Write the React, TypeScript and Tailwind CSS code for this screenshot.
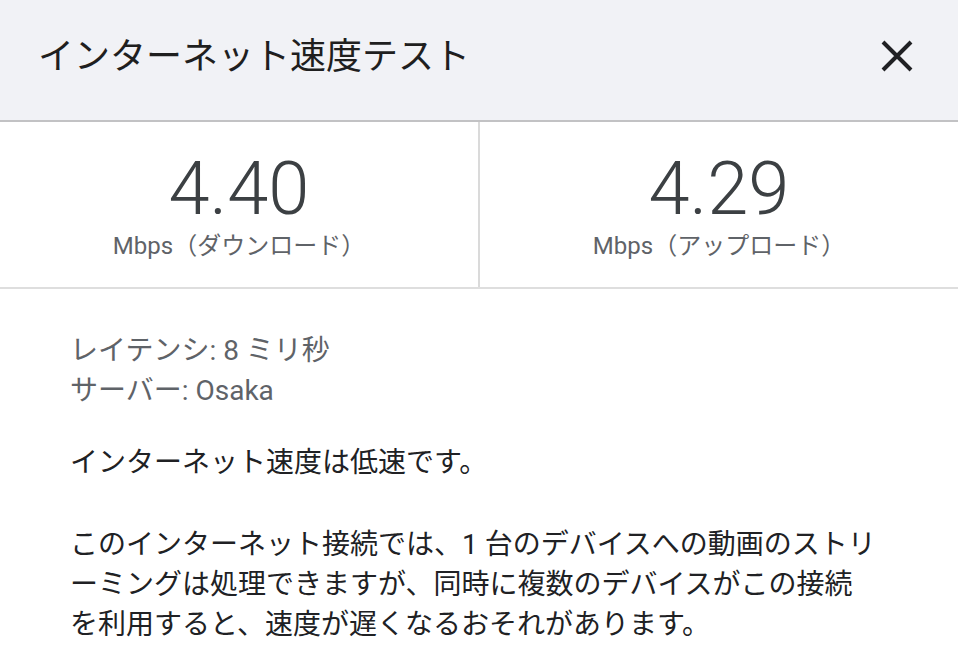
import React from "react";

export default function App() {
  const font = { fontFamily: '"Roboto", "Noto Sans CJK JP", sans-serif' };
  return (
    <div className="w-[958px] h-[652px] bg-white overflow-hidden" style={font}>
      <div className="h-[122px] bg-[#f1f2f6] flex items-center justify-between pl-[38px] pr-[44px] border-b-2 border-[#c2c2c4]">
        <div className="text-[36px] text-[#1f1f1f] font-['Noto_Sans_CJK_JP'] leading-none pb-[14px]">インターネット速度テスト</div>
        <svg width="34" height="34" viewBox="0 0 34 34" className="mb-[8px]">
          <path d="M3 3 L31 31 M31 3 L3 31" stroke="#202124" strokeWidth="4" strokeLinecap="butt" />
        </svg>
      </div>
      <div className="grid grid-cols-[480px_1fr] h-[167px] border-b-2 border-[#dedede]">
        <div className="flex flex-col items-center justify-center border-r-2 border-[#dadada] pt-[4px]">
          <div className="text-[74px] font-light text-[#3c4043] leading-[74px] font-['Roboto']">4.40</div>
          <div className="text-[24px] text-[#5f6368] leading-[32px] mt-[4px] font-['Roboto','Noto_Sans_CJK_JP']">Mbps（ダウンロード）</div>
        </div>
        <div className="flex flex-col items-center justify-center pt-[4px]">
          <div className="text-[74px] font-light text-[#3c4043] leading-[74px] font-['Roboto']">4.29</div>
          <div className="text-[24px] text-[#5f6368] leading-[32px] mt-[4px] font-['Roboto','Noto_Sans_CJK_JP']">Mbps（アップロード）</div>
        </div>
      </div>
      <div className="pl-[70px] pt-[42px] text-[28px] leading-[40px] font-['Roboto','Noto_Sans_CJK_JP']">
        <div className="text-[#5f6368]">
          <div>レイテンシ: 8 ミリ秒</div>
          <div>サーバー: Osaka</div>
        </div>
        <div className="text-[#202124] mt-[32px]">インターネット速度は低速です。</div>
        <div className="text-[#202124] mt-[42px]">
          このインターネット接続では、1 台のデバイスへの動画のストリ<br />
          ーミングは処理できますが、同時に複数のデバイスがこの接続<br />
          を利用すると、速度が遅くなるおそれがあります。
        </div>
      </div>
    </div>
  );
}
